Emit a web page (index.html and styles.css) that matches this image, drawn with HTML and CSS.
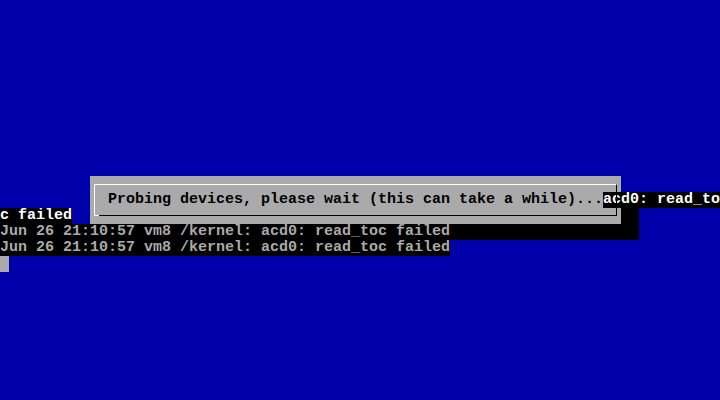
FILE: index.html
```html
<!DOCTYPE html>
<html lang="en">
<head>
    <meta charset="UTF-8">
    <meta name="viewport" content="width=device-width, initial-scale=1.0">
    <title>sysinstall</title>
    <link rel="stylesheet" href="styles.css">
</head>
<body>

    <!-- 80x25 text console -->
    <div class="screen">

        <!-- Dialog with its shadow -->
        <div class="shadow shadow-right"></div>
        <div class="shadow shadow-bottom"></div>
        <div class="dialog">
            <div class="frame"></div>
        </div>
        <div class="dialog-text">Probing devices, please wait (this can take a while)...</div>

        <!-- Kernel messages written over the dialog -->
        <div class="msg msg-bright msg-tail">acd0: read_to</div>
        <div class="msg msg-bright msg-wrap">c failed</div>
        <div class="msg msg-line1">Jun 26 21:10:57 vm8 /kernel: acd0: read_toc failed</div>
        <div class="msg msg-line2">Jun 26 21:10:57 vm8 /kernel: acd0: read_toc failed</div>

        <div class="cursor"></div>
    </div>

</body>
</html>
```

FILE: styles.css
```css
body {
    margin: 0;
    padding: 0;
    background-color: #0000aa;
}

/* Text mode grid: 80 columns of 9px, 25 rows of 16px */
.screen {
    display: grid;
    grid-template-columns: repeat(80, 9px);
    grid-template-rows: repeat(25, 16px);
    width: 720px;
    height: 400px;
    overflow: hidden;
    background-color: #0000aa;
    font-family: "Liberation Mono", "DejaVu Sans Mono", monospace;
    font-size: 15px;
    font-weight: bold;
    line-height: 16px;
}

/* Dialog box */
.dialog {
    grid-row: 12 / span 3;
    grid-column: 11 / span 59;
    background-color: #aaaaaa;
    padding: 8px 4px;
}

.frame {
    position: relative;
    height: 30px;
    border-top: 1px solid #ffffff;
    border-left: 1px solid #ffffff;
    border-bottom: 1px solid #000000;
    border-right: 1px solid #000000;
}

/* little white stub of the bottom-left corner */
.frame::after {
    content: "";
    position: absolute;
    left: -1px;
    bottom: -1px;
    width: 5px;
    height: 1px;
    background-color: #ffffff;
}

.dialog-text {
    grid-row: 13;
    grid-column: 13 / span 55;
    color: #000000;
    white-space: pre;
}

.shadow {
    background-color: #000000;
}

.shadow-right {
    grid-row: 13 / span 2;
    grid-column: 70 / span 2;
}

.shadow-bottom {
    grid-row: 15;
    grid-column: 13 / span 59;
}

/* Console messages */
.msg {
    background-color: #000000;
    color: #aaaaaa;
    white-space: pre;
}

.msg-bright {
    color: #ffffff;
}

.msg-tail {
    grid-row: 13;
    grid-column: 68 / span 13;
}

.msg-wrap {
    grid-row: 14;
    grid-column: 1 / span 8;
}

.msg-line1 {
    grid-row: 15;
    grid-column: 1 / span 50;
}

.msg-line2 {
    grid-row: 16;
    grid-column: 1 / span 50;
}

.cursor {
    grid-row: 17;
    grid-column: 1;
    background-color: #aaaaaa;
}
```
